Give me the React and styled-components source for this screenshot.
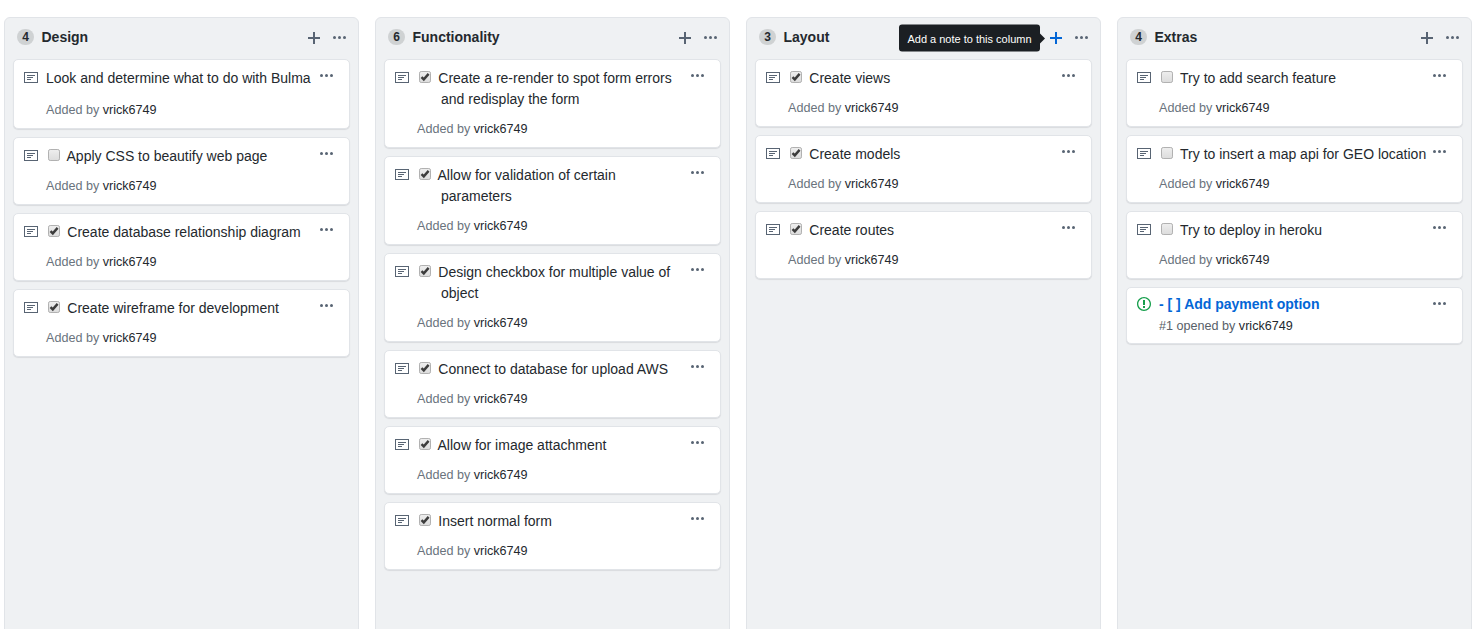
import React from 'react';
import styled, { createGlobalStyle } from 'styled-components';

const GlobalStyle = createGlobalStyle`
  * { box-sizing: border-box; }
  html, body { margin: 0; height: 100%; overflow: hidden; background: #fff; }
  body {
    font: 14px/21px "Liberation Sans", Arial, sans-serif;
    color: #24292e;
  }
`;

const Board = styled.main`
  display: flex;
  gap: 16px;
  height: 629px;
  padding: 17px 0 0 4px;
  overflow: hidden;
`;

const ColumnBox = styled.section`
  flex: 0 0 355px;
  height: 640px;
  padding: 0 8px;
  background: #eff1f3;
  border: 1px solid #e1e4e8;
  border-radius: 6px;
`;

const Header = styled.header`
  display: flex;
  align-items: center;
  height: 41px;
  padding: 0 4px 3px;
`;

const Count = styled.span`
  min-width: 17px;
  height: 16px;
  margin-right: 7.5px;
  border-radius: 20px;
  background: rgba(27, 31, 35, 0.15);
  font-size: 12px;
  font-weight: 600;
  line-height: 16px;
  text-align: center;
`;

const ColumnTitle = styled.h3`
  flex: 1;
  margin: 0;
  font-size: 14px;
  font-weight: 600;
  line-height: 21px;
`;

const IconButton = styled.button`
  position: relative;
  display: flex;
  padding: 0;
  border: 0;
  background: none;
  color: ${(p) => (p.$active ? '#0366d6' : '#586473')};
`;

const AddButton = styled(IconButton)`
  margin: 2px 13px 0 0;
`;

const ColumnMenuButton = styled(IconButton)`
  margin-top: 2px;
`;

const Tooltip = styled.span`
  position: absolute;
  right: calc(100% + 10px);
  top: 50%;
  transform: translateY(-50%);
  width: 141px;
  height: 27px;
  padding: 2px 0 0;
  border-radius: 3px;
  background: #1b1f23;
  color: #fff;
  font-size: 11px;
  line-height: 25px;
  text-align: center;
  white-space: nowrap;

  &::after {
    content: "";
    position: absolute;
    left: 100%;
    top: 50%;
    margin-top: -5px;
    border: 5px solid transparent;
    border-left-color: #1b1f23;
    border-right-width: 0;
  }
`;

const CardList = styled.div`
  display: flex;
  flex-direction: column;
  gap: 8px;
`;

const CardBox = styled.article`
  display: flex;
  align-items: flex-start;
  height: ${(p) => p.$height}px;
  padding: 0 16px 0 10px;
  background: #fff;
  border: 1px solid #e1e4e8;
  border-radius: 5px;
  box-shadow: 0 1px 1px rgba(27, 31, 35, 0.1);
`;

const CardIcon = styled.span`
  display: flex;
  width: 22px;
  flex: none;
  padding-top: ${(p) => (p.$issue ? 8 : 10)}px;
  color: ${(p) => (p.$issue ? '#159e4b' : '#586473')};
`;

const CardBody = styled.div`
  flex: 1;
  min-width: 0;
  padding-top: ${(p) => (p.$issue ? 6 : 8)}px;
`;

const Note = styled.p`
  margin: 0;
  white-space: nowrap;
  padding-left: ${(p) => (p.$task ? 24 : 0)}px;
`;

const IssueTitle = styled.a`
  display: block;
  color: #0366d6;
  font-weight: 600;
  white-space: nowrap;
`;

const Byline = styled.small`
  display: block;
  margin-top: ${(p) => p.$gap}px;
  color: ${(p) => (p.$issue ? '#586069' : '#6a737d')};
  font-size: 12.6px;
  line-height: 21px;
`;

const Author = styled.span`
  color: #24292e;
`;

const MenuButton = styled(IconButton)`
  flex: none;
  margin-top: 8px;
`;

const CheckSvg = styled.svg`
  width: 13px;
  height: 13px;
  margin: 0 2.8px 3.5px -22.4px;
  vertical-align: middle;
`;

function Checkbox({ checked }) {
  return (
    <CheckSvg viewBox="0 0 13 13">
      <defs>
        <linearGradient id="boxFill" x1="0" y1="0" x2="0" y2="1">
          <stop offset="0" stopColor="#eeeeee" />
          <stop offset="1" stopColor="#dcdcdc" />
        </linearGradient>
      </defs>
      <rect x="0.5" y="0.5" width="11" height="11" rx="1.7" fill="url(#boxFill)" stroke="#b1b1b1" />
      {checked && <path d="M2.5 6.1 4.8 8.4 9.6 2.9" fill="none" stroke="#3c3c3c" strokeWidth="2.4" />}
    </CheckSvg>
  );
}

const PlusIcon = () => (
  <svg width="12" height="16" viewBox="0 0 12 16" fill="currentColor">
    <path d="M12 9H7v5H5V9H0V7h5V2h2v5h5v2z" />
  </svg>
);

const DotsIcon = () => (
  <svg width="13" height="16" viewBox="0 0 13 16" fill="currentColor">
    <circle cx="1.5" cy="7.5" r="1.5" />
    <circle cx="6.5" cy="7.5" r="1.5" />
    <circle cx="11.5" cy="7.5" r="1.5" />
  </svg>
);

const NoteIcon = () => (
  <svg width="14" height="16" viewBox="0 0 14 16" fill="currentColor" fillRule="evenodd">
    <path d="M0 2h14v11H0V2zm1 1v9h12V3H1zm2 2h8v1H3V5zm0 2h6v1H3V7zm0 2h4v1H3V9z" />
  </svg>
);

const IssueIcon = () => (
  <svg width="14" height="16" viewBox="0 0 14 16" fill="currentColor" fillRule="evenodd">
    <path d="M7 2.3c3.14 0 5.7 2.56 5.7 5.7s-2.56 5.7-5.7 5.7A5.71 5.71 0 0 1 1.3 8c0-3.14 2.56-5.7 5.7-5.7zM7 1C3.14 1 0 4.14 0 8s3.14 7 7 7 7-3.14 7-7-3.14-7-7-7zm1 3H6v5h2V4zm0 6H6v2h2v-2z" />
  </svg>
);

const columns = [
  {
    title: 'Design',
    cards: [
      { lines: ['Look and determine what to do with Bulma'] },
      { lines: ['Apply CSS to beautify web page'], checked: false },
      { lines: ['Create database relationship diagram'], checked: true },
      { lines: ['Create wireframe for development'], checked: true },
    ],
  },
  {
    title: 'Functionality',
    cards: [
      { lines: ['Create a re-render to spot form errors', 'and redisplay the form'], checked: true },
      { lines: ['Allow for validation of certain', 'parameters'], checked: true },
      { lines: ['Design checkbox for multiple value of', 'object'], checked: true },
      { lines: ['Connect to database for upload AWS'], checked: true },
      { lines: ['Allow for image attachment'], checked: true },
      { lines: ['Insert normal form'], checked: true },
    ],
  },
  {
    title: 'Layout',
    tooltip: 'Add a note to this column',
    cards: [
      { lines: ['Create views'], checked: true },
      { lines: ['Create models'], checked: true },
      { lines: ['Create routes'], checked: true },
    ],
  },
  {
    title: 'Extras',
    cards: [
      { lines: ['Try to add search feature'], checked: false },
      { lines: ['Try to insert a map api for GEO location'], checked: false },
      { lines: ['Try to deploy in heroku'], checked: false },
      { issue: true, lines: ['- [ ] Add payment option'] },
    ],
  },
];

function Card({ lines, checked, issue }) {
  const task = checked !== undefined;
  const height = issue ? 57 : (task ? 47 : 49) + 21 * lines.length;
  return (
    <CardBox $height={height}>
      <CardIcon $issue={issue}>{issue ? <IssueIcon /> : <NoteIcon />}</CardIcon>
      <CardBody $issue={issue}>
        {issue ? (
          <IssueTitle>{lines[0]}</IssueTitle>
        ) : (
          <Note $task={task}>
            {task && <Checkbox checked={checked} />}
            {task && ' '}
            {lines.map((line, i) => (
              <React.Fragment key={line}>
                {i > 0 && <br />}
                {line}
              </React.Fragment>
            ))}
          </Note>
        )}
        <Byline $issue={issue} $gap={issue ? 1 : task ? 9 : 11}>
          {issue ? '#1 opened by ' : 'Added by '}
          <Author>vrick6749</Author>
        </Byline>
      </CardBody>
      <MenuButton aria-label="Card menu"><DotsIcon /></MenuButton>
    </CardBox>
  );
}

function Column({ title, cards, tooltip }) {
  return (
    <ColumnBox>
      <Header>
        <Count>{cards.length}</Count>
        <ColumnTitle>{title}</ColumnTitle>
        <AddButton $active={Boolean(tooltip)} aria-label="Add a note">
          <PlusIcon />
          {tooltip && <Tooltip>{tooltip}</Tooltip>}
        </AddButton>
        <ColumnMenuButton aria-label="Column menu"><DotsIcon /></ColumnMenuButton>
      </Header>
      <CardList>
        {cards.map((card) => <Card key={card.lines[0]} {...card} />)}
      </CardList>
    </ColumnBox>
  );
}

export default function App() {
  return (
    <>
      <GlobalStyle />
      <Board>
        {columns.map((column) => <Column key={column.title} {...column} />)}
      </Board>
    </>
  );
}
